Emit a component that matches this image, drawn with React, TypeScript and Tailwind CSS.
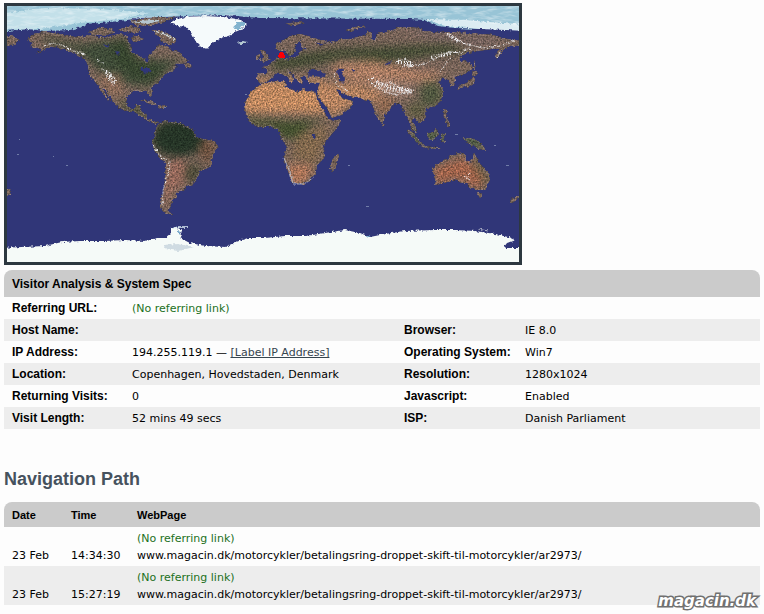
import React from 'react';
import { clsx } from 'clsx';

const LAND = [
  // North America
  'M27 40L33 34L45 32L60 34L75 37L90 35L105 38L118 34L126 35L130 45L131 52L139 56L144 59L146 63L149 60L148 55L153 52L157 46L165 45L172 51L179 52L183 57L188 60L186 63L177 64L174 70L167 73L163 77L159 82L151 88L152 97L149 96L146 91L133 91L127 96L126 103L130 109L134 108L136 105L141 105L140 111L146 114L147 118L152 121L158 122L156 124L148 121L142 117L135 112L127 111L119 108L115 104L111 98L105 90L102 88L106 95L110 101L106 98L100 89L97 84L92 78L88 70L88 64L84 59L78 56L68 50L56 47L48 48L34 55L42 49L30 46L33 43Z',
  'M0 36L13 36L19 40L14 44L9 46L0 45Z',
  'M89 32L100 28L112 29L114 33L104 35L94 35Z',
  'M118 30L128 26L141 28L138 33L126 32Z',
  'M130 21L150 18L176 17L164 22L148 26L136 26Z',
  'M152 30L160 30L170 35L176 40L172 45L163 42L158 36Z',
  'M130 37L138 36L144 39L135 42Z',
  'M184 64L190 63L192 67L186 68Z',
  // Caribbean
  'M140 100L150 101L157 104L150 104Z M158 105L167 106L165 109L159 108Z',
  // South America
  'M156 128L159 124L165 120L169 122L178 122L185 126L193 130L196 137L203 139L213 141L218 146L213 155L211 165L208 168L200 171L198 177L192 184L186 186L185 190L177 192L177 197L173 199L172 205L170 207L168 211L172 214L166 214L161 209L160 203L163 194L165 180L166 163L159 157L153 147L152 141L155 134Z',
  // Africa
  'M261 84L270 82L285 81L286 87L293 90L297 92L301 89L315 92L318 100L323 110L328 118L333 121L341 119L338 127L330 136L323 145L325 157L317 165L316 172L310 180L303 184L293 184L288 170L284 158L287 147L282 139L280 132L277 129L271 126L260 128L252 124L246 115L245 103L249 95L255 89Z',
  'M338 153L339 157L335 169L332 172L330 168L333 158Z',
  // Eurasia
  'M257 73L267 73L267 69L263 67L269 65L275 60L280 57L281 52L284 55L284 58L293 58L298 55L300 50L307 49L302 47L300 42L304 39L299 41L295 47L296 51L291 56L287 55L286 51L280 51L275 48L276 44L284 40L290 36L300 34L308 36L314 38L327 42L323 44L315 42L320 46L327 43L333 42L340 39L348 39L357 37L366 35L368 31L372 33L371 39L376 39L377 33L390 31L398 28L407 27L418 28L425 31L440 33L450 32L467 33L480 34L493 35L503 38L525 42L525 46L510 46L503 50L497 59L495 56L500 49L492 49L478 51L467 53L460 57L460 61L470 62L473 68L467 73L460 75L455 77L455 81L454 86L450 85L449 80L443 78L438 82L443 88L443 97L438 104L432 107L426 108L425 113L426 118L420 123L415 118L413 116L412 122L416 128L417 133L412 129L408 119L404 112L401 104L395 103L390 109L385 115L384 121L381 124L377 117L374 109L371 102L365 100L357 97L349 96L342 93L336 88L338 94L342 98L346 99L353 102L349 109L340 115L332 118L327 108L318 96L317 90L320 83L312 83L307 82L306 77L300 77L303 82L299 83L295 76L287 70L294 79L291 84L288 77L281 73L276 74L269 80L263 83L257 82Z',
  'M264 62L260 60L264 57L261 52L263 50L267 55L270 60Z M256 56L260 54L260 60L256 60Z',
  'M285 24L298 22L305 23L296 25Z M346 30L355 27L366 26L357 29L348 31Z',
  // Japan, Sakhalin
  'M474 60L476 69L474 69Z M473 71L478 73L475 76L472 75Z M473 77L475 83L469 86L462 87L457 90L459 86L467 83Z',
  // South-east Asia
  'M407 129L412 132L421 142L424 146L419 145L413 138Z M421 146L432 147L442 149L450 149L438 149L425 148Z M427 134L432 132L436 129L438 133L435 140L429 140Z M441 134L447 133L443 137L446 142L441 141Z M443 109L447 110L446 117L449 122L444 117Z M447 121L451 124L449 127L446 124Z M463 138L470 138L480 142L486 150L478 149L472 145L466 142Z M381 122L385 125L383 127Z',
  // Australia, Tasmania, New Zealand
  'M432 168L437 164L444 161L450 156L454 154L459 153L466 156L466 160L471 163L474 153L477 158L480 164L487 172L490 179L487 187L484 190L476 190L469 187L466 183L461 183L455 179L447 182L440 184L435 185L435 179Z',
  'M477 193L483 194L480 198Z M520 195L520 198L512 202L510 204L511 199Z M5 187L11 190L10 195L5 195Z',
].join(' ');

const GREENLAND =
  'M170 23L176 19L186 17L205 16L224 17L241 20L247 25L242 29L235 32L231 35L222 38L212 43L207 49L201 47L196 42L192 34L187 27L178 26Z';

const SEAS =
  'M309 71L315 69L320 71L326 74L324 77L313 76L308 77Z M336 71L341 68L344 70L342 74L345 79L344 83L339 81L339 76Z M351 69L356 69L354 72Z M385 64L392 61L391 62L386 66Z M312 134L316 134L315 139L312 138Z M140 68L148 68L152 71L145 74Z M287 59L290 58L288 61Z M104 45L109 45L107 48Z M115 51L120 52L117 55Z';

const ARCTIC =
  'M-3 -4H529V31L505 29L480 29L455 28L438 26L425 20L410 19L260 18L247 17L225 15L190 16L165 17L140 18L120 21L100 23L84 24L86 26L70 30L45 31L28 29L-3 32Z';

const ANTARCTICA =
  'M-3 248L22 247L45 246L62 242L80 241L105 241L125 240L145 241L157 238L165 238L171 233L171 228L176 227L182 230L180 238L190 243L205 246L225 247L236 242L248 238L265 238L285 236L305 236L325 233L345 230L360 233L370 237L385 234L405 231L435 230L455 230L475 231L495 234L508 237L515 240L507 243L504 247L507 248L529 248V272H-3Z';

// Snowy mountain ranges, drawn as dotted strokes
const PEAKS = [
  'M44 46L52 43L62 45L73 51L85 54',
  'M97 59L104 64',
  'M102 69L110 73L115 79L114 86',
  'M106 74L112 83',
  'M153 145L160 156L170 162L168 175L163 190L162 206',
  'M368 79L375 86L386 92L397 95L408 92L414 90',
  'M372 77L380 85L390 82L400 88L412 92',
  'M334 74L336 84L348 91',
  'M395 62L405 59L413 63L402 67',
  'M408 66L425 64L440 56L450 52L460 53L470 48',
  'M447 33L454 39L468 45L484 48L500 46L514 41',
  'M500 52L497 58M450 58L441 71',
  'M464 176L470 180M470 174L466 181',
];

const WorldMap = () => (
  <svg viewBox="7 6 512 256" className="block h-auto w-full" role="img" aria-label="Visitor location">
    <defs>
      <clipPath id="land">
        <path d={LAND} />
      </clipPath>
      <filter id="soft" x="-20%" y="-20%" width="140%" height="140%" colorInterpolationFilters="sRGB">
        <feGaussianBlur stdDeviation="4" />
      </filter>
      <filter id="terrain" filterUnits="userSpaceOnUse" x="-3" y="-4" width="532" height="276" colorInterpolationFilters="sRGB">
        <feTurbulence type="fractalNoise" baseFrequency="0.3" numOctaves="2" seed="4" result="warp" />
        <feDisplacementMap in="SourceGraphic" in2="warp" scale="4" xChannelSelector="R" yChannelSelector="G" result="coast" />
        <feTurbulence type="fractalNoise" baseFrequency="0.6" numOctaves="2" seed="9" />
        <feColorMatrix values="1.3 0 0 0 -0.15  1.2 0.1 0 0 -0.15  1.2 0 0.1 0 -0.15  0 0 0 0 1" result="grain" />
        <feComposite in="coast" in2="grain" operator="arithmetic" k1="0.9" k2="0.55" k3="0" k4="0" />
      </filter>
      <filter id="ragged" filterUnits="userSpaceOnUse" x="-3" y="-4" width="532" height="276" colorInterpolationFilters="sRGB">
        <feTurbulence type="fractalNoise" baseFrequency="0.35" numOctaves="2" seed="2" result="warp" />
        <feDisplacementMap in="SourceGraphic" in2="warp" scale="4" xChannelSelector="R" yChannelSelector="G" />
      </filter>
      <filter id="frost" filterUnits="userSpaceOnUse" x="-3" y="-4" width="532" height="276" colorInterpolationFilters="sRGB">
        <feTurbulence type="fractalNoise" baseFrequency="0.08 0.3" numOctaves="3" seed="7" />
        <feColorMatrix values="0 0 0 0 1  0 0 0 0 1  0 0 0 0 1  2.2 0 0 0 -0.95" />
        <feComposite in2="SourceGraphic" operator="in" />
      </filter>
    </defs>

    <rect x="7" y="6" width="512" height="256" fill="#303678" />

    <g filter="url(#ragged)">
      <path d={ARCTIC} fill="#98c4d6" />
      <path d="M-3 14L45 8L100 9L150 13L120 19L80 23L40 29L-3 30Z" fill="#c3e0e9" />
      <path d="M425 19L465 20L529 25V31L480 29L445 26Z" fill="#dcecf2" />
    </g>
    <path d="M7 6H519V27L430 17L250 15L90 21L60 27L7 29Z" filter="url(#frost)" opacity="0.5" />

    <g filter="url(#terrain)">
      <g clipPath="url(#land)">
        <rect x="-3" y="-4" width="532" height="276" fill="#776358" />
        <g filter="url(#soft)">
          {/* Americas */}
          <path d="M40 36L80 44L125 38L135 58L170 60L183 56L165 74L150 87L126 84L100 72L78 52L45 42Z" fill="#3f4b38" />
          <path d="M110 42L128 40L140 62L160 64L155 80L135 78L115 62Z" fill="#37452f" />
          <path d="M96 75L120 74L124 92L118 98L105 92Z" fill="#8a6a57" />
          <path d="M118 100L142 108L152 120L140 116L122 108Z" fill="#475038" />
          <ellipse cx="178" cy="138" rx="27" ry="19" fill="#263527" />
          <ellipse cx="207" cy="150" rx="8" ry="12" fill="#6c503e" />
          <path d="M170 160L186 160L184 184L172 190L166 210L163 190Z" fill="#95685a" />
          <ellipse cx="193" cy="173" rx="9" ry="10" fill="#4b4a38" />
          {/* Africa */}
          <path d="M240 80H326L332 113H240Z" fill="#bf885f" />
          <path d="M244 118L290 121L328 119L310 125L300 139L285 139L270 127L246 124Z" fill="#424f2e" />
          <path d="M298 134L330 124L322 150L315 164L290 158Z" fill="#80674c" />
          <path d="M286 165L314 165L304 184L292 184Z" fill="#b07658" />
          {/* Europe and Asia */}
          <path d="M268 60L300 54L340 48L400 46L450 44L470 52L430 56L385 62L345 58L310 66L275 70Z" fill="#424a33" />
          <path d="M330 64L372 60L420 71L443 72L432 82L390 80L360 83L338 78Z" fill="#aa7c62" />
          <path d="M320 84L350 84L382 90L378 100L352 105L330 117L316 92Z" fill="#b5825f" />
          <path d="M400 28L515 40L480 45L430 38Z" fill="#746260" />
          <ellipse cx="431" cy="94" rx="12" ry="13" fill="#4f563f" />
          <ellipse cx="386" cy="105" rx="10" ry="10" fill="#8e6850" />
          <path d="M370 81L388 82L412 88L408 95L380 91Z" fill="#ac8b7c" />
          <path d="M408 102L426 106L420 120L408 114Z" fill="#59593e" />
          <path d="M410 128L485 135L482 150L415 147Z" fill="#4f5b45" />
          {/* Australia */}
          <path d="M434 168L465 158L485 178L478 190L460 178L436 184Z" fill="#a0634a" />
          <path d="M474 156L489 178L487 186L475 168Z" fill="#665b40" />
        </g>
        <path d={LAND} fill="none" stroke="#85767a" strokeWidth="1" />
      </g>
    </g>

    <g filter="url(#ragged)">
      <path d={SEAS} fill="#303678" />
      <path d={GREENLAND} fill="#f5fafb" />
      <path d="M236 22L245 22L241 29L234 29Z" fill="#82b3ce" />
      <path d="M130 22L150 20L163 20L148 24Z" fill="#b5c6cf" />
      <path d="M154 31L164 34L175 40" stroke="#d5e0e5" fill="none" />
      <path d="M237 42L242 41L248 42L245 44L239 44Z" fill="#b4c8d1" />
      <path d={ANTARCTICA} fill="#f5faf8" />
      <path d="M172 229L178 227L187 227" stroke="#dcebf2" strokeWidth="1.5" fill="none" />
      <path d="M163 245L178 244L194 247L178 251L166 249Z" fill="#cfdbe2" />
      <path d="M177 231L181 232L180 235Z M366 236L370 235L368 239Z" fill="#689dc4" />
      <path d="M478 229L488 231M284 158L290 172L293 184L304 184L314 177" stroke="#c0c4d2" strokeWidth="0.8" fill="none" />
    </g>

    <g filter="url(#ragged)" fill="none" stroke="#f0f0f2" strokeWidth="1" strokeDasharray="2 1 1 1">
      {PEAKS.map((d) => (
        <path key={d} d={d} />
      ))}
      <path d="M376 83L388 88L411 92" strokeWidth="6" strokeDasharray="1 2" />
      <path d="M398 62L412 63M106 72L114 82" strokeWidth="5" strokeDasharray="1 2" />
      <path d="M432 57L452 53M447 34L458 41" strokeWidth="4" strokeDasharray="1 2" />
    </g>

    <g fill="#717da8">
      <path d="M19 139h1v1h-1zM17 154h2v1h-2zM53 156h1v1h-1zM66 165h2v1h-2zM348 165h2v1h-2zM366 206h3v1h-3zM164 107h2v1h-2zM506 165h3v1h-3zM494 145h2v1h-2zM455 134h3v1h-3zM245 94h2v1h-2z" />
    </g>

    {/* Visitor marker */}
    <path d="M280 52h3v1h1v2h1v3h-6v-1h-1v-2h1v-2h1z" fill="#fb0007" />
  </svg>
);

const specs = [
  { label: 'Host Name:', value: '', label2: 'Browser:', value2: 'IE 8.0' },
  { label: 'IP Address:', value: '194.255.119.1', link: '[Label IP Address]', label2: 'Operating System:', value2: 'Win7' },
  { label: 'Location:', value: 'Copenhagen, Hovedstaden, Denmark', label2: 'Resolution:', value2: '1280x1024' },
  { label: 'Returning Visits:', value: '0', label2: 'Javascript:', value2: 'Enabled' },
  { label: 'Visit Length:', value: '52 mins 49 secs', label2: 'ISP:', value2: 'Danish Parliament' },
];

const visits = [
  { date: '23 Feb', time: '14:34:30', page: 'www.magacin.dk/motorcykler/betalingsring-droppet-skift-til-motorcykler/ar2973/' },
  { date: '23 Feb', time: '15:27:19', page: 'www.magacin.dk/motorcykler/betalingsring-droppet-skift-til-motorcykler/ar2973/' },
];

const Label = ({ children }: { children: React.ReactNode }) => (
  <th scope="row" className="whitespace-nowrap pl-2 text-left font-['Liberation_Sans',sans-serif] text-[12px] font-bold">
    {children}
  </th>
);

const SpecTable = () => (
  <table className="mt-[5px] w-full table-fixed">
    <colgroup>
      <col className="w-[120px]" />
      <col className="w-[272px]" />
      <col className="w-[121px]" />
      <col />
    </colgroup>
    <thead>
      <tr className="h-[27px]">
        <th colSpan={4} className="rounded-t-lg bg-[#cbcbcb] pl-2 text-left font-['Liberation_Sans',sans-serif] text-[12px] font-bold">
          Visitor Analysis &amp; System Spec
        </th>
      </tr>
    </thead>
    <tbody>
      <tr className="h-[22px]">
        <Label>Referring URL:</Label>
        <td colSpan={3} className="pl-2 pt-[2px] text-[#1b701b]">(No referring link)</td>
      </tr>
      {specs.map((s, i) => (
        <tr key={s.label} className={clsx('h-[22px]', i % 2 === 0 && 'bg-[#ededed]')}>
          <Label>{s.label}</Label>
          <td className="pl-2 pt-[2px]">
            {s.value}
            {s.link && (
              <>
                {' — '}
                <a href="#label" className="text-[#36454f] underline">{s.link}</a>
              </>
            )}
          </td>
          <Label>{s.label2}</Label>
          <td className="pl-2 pt-[2px]">{s.value2}</td>
        </tr>
      ))}
    </tbody>
  </table>
);

const PathTable = () => (
  <table className="w-full">
    <thead>
      <tr className="h-[25px] text-left font-['Liberation_Sans',sans-serif] text-[11px]">
        <th className="w-[59px] rounded-tl-lg bg-[#cbcbcb] pl-2 font-bold">Date</th>
        <th className="w-[66px] bg-[#cbcbcb] pl-2 font-bold">Time</th>
        <th className="rounded-tr-lg bg-[#cbcbcb] pl-2 font-bold">WebPage</th>
      </tr>
    </thead>
    <tbody>
      {visits.map((v, i) => (
        <tr key={v.time} className={clsx('align-bottom leading-[17px]', i % 2 === 1 && 'bg-[#ededed]')}>
          <td className="whitespace-nowrap pb-[2px] pl-2">{v.date}</td>
          <td className="whitespace-nowrap pb-[2px] pl-2">{v.time}</td>
          <td className="pb-[2px] pl-2 pt-[3px]">
            <div className="text-[#1b701b]">(No referring link)</div>
            <div>{v.page}</div>
          </td>
        </tr>
      ))}
    </tbody>
  </table>
);

export default function App() {
  return (
    <main className="relative min-h-screen bg-[#fdfdfd] px-1 pb-[9px] pt-[3px] font-['DejaVu_Sans',sans-serif] text-[11px] leading-[16px] text-black">
      <div className="max-w-[518px] border-3 border-[#2d3840]">
        <WorldMap />
      </div>

      <SpecTable />

      <h2 className="mb-3 mt-[39px] font-['Liberation_Sans',sans-serif] text-[18px] font-bold leading-[22px] text-[#46525e]">
        Navigation Path
      </h2>
      <PathTable />

      <div className="absolute bottom-1 right-2 font-['DejaVu_Sans',sans-serif] text-[15px] font-bold italic leading-[18px] text-white [paint-order:stroke] [-webkit-text-stroke:3px_#707070]">
        magacin.dk
      </div>
    </main>
  );
}
